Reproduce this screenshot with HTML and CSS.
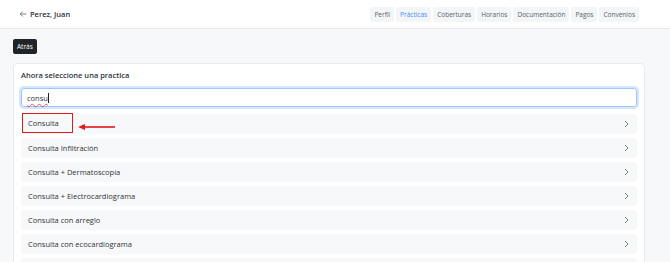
FILE: index.html
```html
<!DOCTYPE html>
<html lang="es">
<head>
    <meta charset="UTF-8">
    <meta name="viewport" content="width=device-width, initial-scale=1.0">
    <title>Perez, Juan - Prácticas</title>
    <link rel="stylesheet" href="styles.css">
</head>
<body>
    <header class="topbar">
        <div class="patient">
            <svg class="back-arrow" width="8" height="8" viewBox="0 0 16 16">
                <path d="M14 8H3M7 3.5L2.5 8 7 12.5" fill="none" stroke="#666" stroke-width="1.6" stroke-linecap="round" stroke-linejoin="round"/>
            </svg>
            <span>Perez, Juan</span>
        </div>
        <nav class="tabs">
            <a class="tab">Perfil</a>
            <a class="tab active">Prácticas</a>
            <a class="tab">Coberturas</a>
            <a class="tab">Horarios</a>
            <a class="tab">Documentación</a>
            <a class="tab">Pagos</a>
            <a class="tab">Convenios</a>
        </nav>
    </header>

    <main class="page">
        <button class="btn-back">Atrás</button>

        <section class="card">
            <h2 class="card-title">Ahora seleccione una practica</h2>
            <div class="search" role="textbox"><span class="typed">consu</span><span class="caret"></span></div>

            <ul class="results">
                <li class="result marked">
                    <span class="highlight">Consulta</span>
                    <svg class="pointer" width="40" height="8" viewBox="0 0 40 8">
                        <path d="M6 4H37" stroke="#e01b1b" stroke-width="1.6"/>
                        <path d="M0 4L7 1V7Z" fill="#e01b1b"/>
                    </svg>
                    <svg class="chevron" width="5" height="8" viewBox="0 0 5 8"><path d="M1 1l3 3-3 3" fill="none" stroke="#6c757d" stroke-width="0.9"/></svg>
                </li>
                <li class="result"><span>Consulta Infiltración</span><svg class="chevron" width="5" height="8" viewBox="0 0 5 8"><path d="M1 1l3 3-3 3" fill="none" stroke="#6c757d" stroke-width="0.9"/></svg></li>
                <li class="result"><span>Consulta + Dermatoscopía</span><svg class="chevron" width="5" height="8" viewBox="0 0 5 8"><path d="M1 1l3 3-3 3" fill="none" stroke="#6c757d" stroke-width="0.9"/></svg></li>
                <li class="result"><span>Consulta + Electrocardiograma</span><svg class="chevron" width="5" height="8" viewBox="0 0 5 8"><path d="M1 1l3 3-3 3" fill="none" stroke="#6c757d" stroke-width="0.9"/></svg></li>
                <li class="result"><span>Consulta con arreglo</span><svg class="chevron" width="5" height="8" viewBox="0 0 5 8"><path d="M1 1l3 3-3 3" fill="none" stroke="#6c757d" stroke-width="0.9"/></svg></li>
                <li class="result"><span>Consulta con ecocardiograma</span><svg class="chevron" width="5" height="8" viewBox="0 0 5 8"><path d="M1 1l3 3-3 3" fill="none" stroke="#6c757d" stroke-width="0.9"/></svg></li>
                <li class="result"></li>
            </ul>
        </section>
    </main>
</body>
</html>
```

FILE: styles.css
```css
:root {
    --page-bg: #f7f8fa;
    --line: #e8eaed;
    --text: #2f3337;
    --muted: #5c6166;
    --blue: #3d8bfd;
    --red: #e01b1b;
}

body, html {
    margin: 0;
    padding: 0;
    font-family: 'Open Sans', 'Noto Sans', sans-serif;
    background-color: var(--page-bg);
    color: var(--text);
    height: 262px;
    overflow: hidden;
}

.topbar {
    height: 28px;
    background: #fff;
    border-bottom: 1px solid var(--line);
    display: flex;
    align-items: center;
    justify-content: space-between;
    padding: 0 31px 0 19px;
}

.patient {
    display: flex;
    align-items: center;
    gap: 3px;
    font-size: 7.5px;
    font-weight: 600;
    color: #333;
}

.tabs {
    display: flex;
    gap: 2px;
}

.tab {
    background: #f4f5f7;
    color: var(--muted);
    font-size: 6.5px;
    line-height: 15px;
    padding: 0 4px;
    border-radius: 2px;
}

.tab.active {
    color: var(--blue);
}

.page {
    padding: 10px 25px 0 13px;
}

.btn-back {
    display: block;
    background: #212529;
    color: #fff;
    border: none;
    border-radius: 2px;
    font-family: inherit;
    font-size: 6.5px;
    height: 15px;
    padding: 0 4px;
}

.card {
    margin-top: 9px;
    background: #fff;
    border: 1px solid var(--line);
    border-radius: 4px;
    padding: 5px 7px 0;
}

.card-title {
    margin: 0;
    font-size: 7.5px;
    font-weight: 600;
    line-height: 12px;
}

.search {
    display: flex;
    align-items: center;
    box-sizing: border-box;
    height: 19px;
    margin-top: 7px;
    border: 1px solid #9ec5fe;
    border-radius: 3px;
    box-shadow: 0 0 0 2px rgba(13, 110, 253, 0.18);
    font-size: 7.5px;
    color: var(--text);
    padding: 0 5px;
}

.typed {
    text-decoration: underline wavy rgba(224, 27, 27, 0.7);
    text-decoration-thickness: 0.5px;
    text-underline-offset: 1.5px;
}

.caret {
    width: 1px;
    height: 10px;
    background: #222;
}

.results {
    list-style: none;
    margin: 7px 0 0;
    padding: 0;
    display: flex;
    flex-direction: column;
    gap: 4px;
}

.result {
    position: relative;
    display: flex;
    align-items: center;
    justify-content: space-between;
    height: 20px;
    background: #f7f8fa;
    border-radius: 3px;
    padding: 0 8px 0 7px;
    font-size: 7.5px;
    color: var(--text);
}

.highlight {
    position: absolute;
    left: 1px;
    top: -1px;
    box-sizing: border-box;
    width: 51px;
    height: 20px;
    border: 1.5px solid var(--red);
    padding-left: 5px;
    display: flex;
    align-items: center;
}

.pointer {
    position: absolute;
    left: 57px;
    top: 9px;
}

.result.marked .chevron {
    margin-left: auto;
}
```
